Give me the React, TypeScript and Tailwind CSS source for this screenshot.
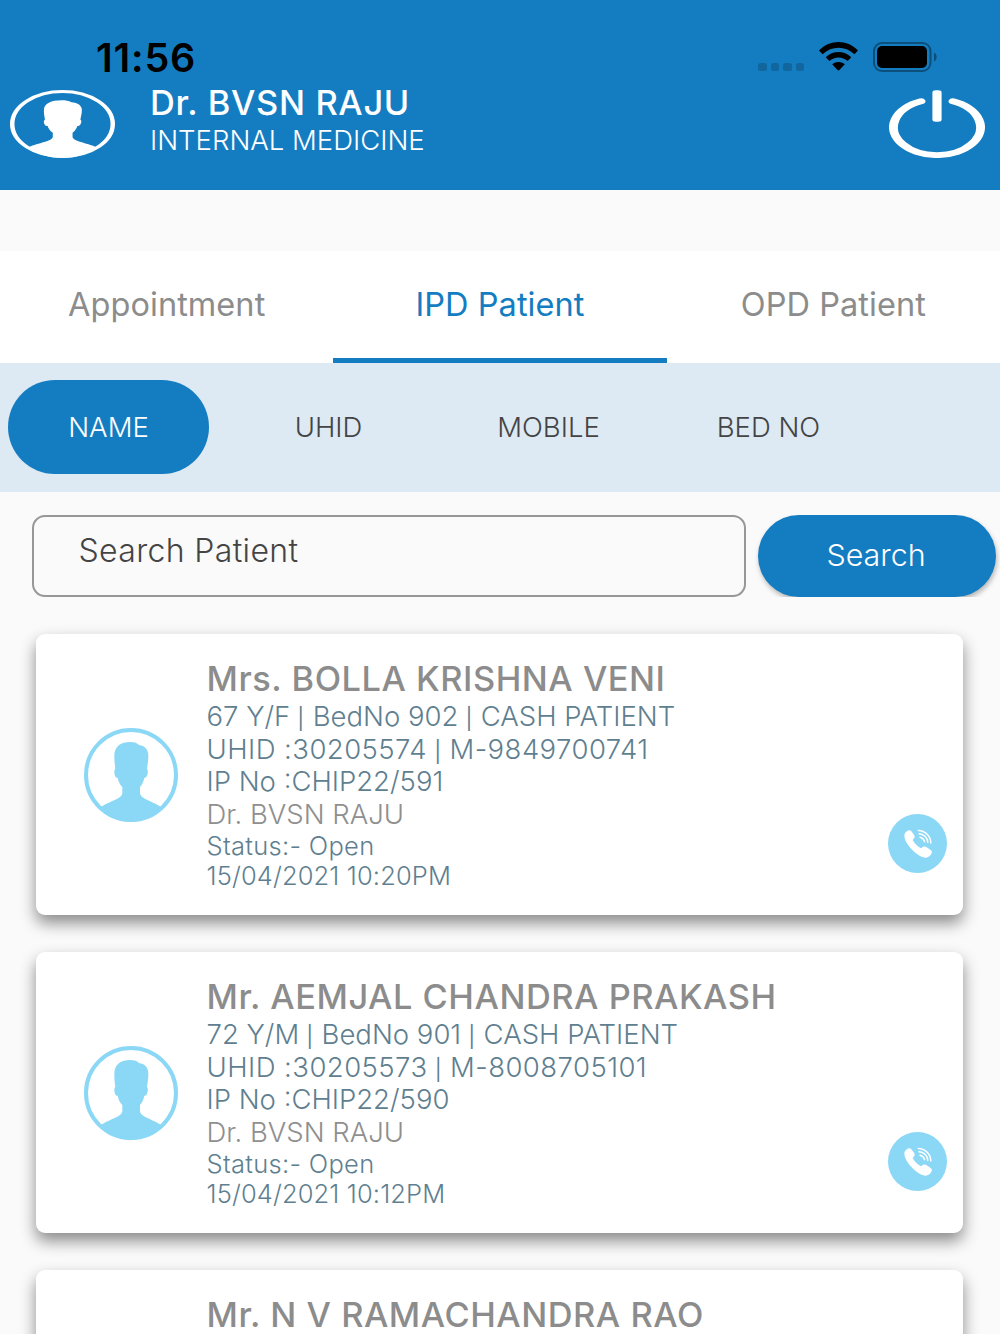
import clsx from "clsx";

interface Patient {
  name: string;
  info: string[];
  contact: string[];
  ipNo: string;
  doctor: string;
  status: string;
  date: string;
}

const tabs = ["Appointment", "IPD Patient", "OPD Patient"];
const filters = ["NAME", "UHID", "MOBILE", "BED NO"];

const patients: Patient[] = [
  {
    name: "Mrs. BOLLA KRISHNA VENI",
    info: ["67 Y/F", "BedNo 902", "CASH PATIENT"],
    contact: ["UHID :30205574", "M-9849700741"],
    ipNo: "IP No :CHIP22/591",
    doctor: "Dr. BVSN RAJU",
    status: "Status:- Open",
    date: "15/04/2021 10:20PM",
  },
  {
    name: "Mr. AEMJAL CHANDRA PRAKASH",
    info: ["72 Y/M", "BedNo 901", "CASH PATIENT"],
    contact: ["UHID :30205573", "M-8008705101"],
    ipNo: "IP No :CHIP22/590",
    doctor: "Dr. BVSN RAJU",
    status: "Status:- Open",
    date: "15/04/2021 10:12PM",
  },
  {
    name: "Mr. N V RAMACHANDRA RAO",
    info: [],
    contact: [],
    ipNo: "",
    doctor: "",
    status: "",
    date: "",
  },
];

function AvatarIcon({ className }: { className?: string }) {
  return (
    <svg
      viewBox="71 53 282 282"
      preserveAspectRatio="none"
      fill="currentColor"
      className={className}
    >
      <circle cx="212" cy="194" r="135" fill="none" stroke="currentColor" strokeWidth="12" />
      <path d="M210 95C220 95 229 97 236 104C253 106 264 117 264 136C264 150 262 162 260 175C264 179 263 188 260 196C258 201 255 202 252 202C250 213 246 221 239 230V247C239 266 278 272 302 290C282 318 250 334 212 334C174 334 142 318 122 290C146 272 186 266 186 247V230C178 221 174 213 172 202C168 202 166 201 164 196C161 188 161 179 165 175C163 162 162 150 162 136C162 108 182 95 210 95Z" />
    </svg>
  );
}

function PowerIcon() {
  return (
    <svg
      viewBox="-48 -58 96 106"
      preserveAspectRatio="none"
      className="w-24 h-[68px]"
      fill="none"
      stroke="white"
    >
      <path d="M-16 -40.4A43.5 43.5 0 1 0 16 -40.4" strokeWidth="9" strokeLinecap="round" />
      <rect x="-4.6" y="-57.5" width="9.2" height="49" rx="3.5" fill="white" stroke="none" />
    </svg>
  );
}

function PhoneIcon() {
  return (
    <svg viewBox="84 73 177 177" className="w-[59px] h-[59px]">
      <circle cx="172.5" cy="161.5" r="88.5" fill="#8ad7f6" />
      <path
        fill="white"
        d="M133 137C133 130 138 126 146 122C149 121 152 122 154 125L161 134C164 138 165 142 163 145L158 151C163 161 173 170 183 176L188 172C192 170 196 170 200 173L211 180C215 183 217 187 215 191C212 198 206 203 199 204C190 205 174 197 160 184C145 170 133 152 133 137Z"
      />
      <g fill="none" stroke="white" strokeWidth="4.6" strokeLinecap="round">
        <path d="M175 122.5A38 38 0 0 1 212.500 160" />
        <path d="M177 132A28 28 0 0 1 203.500 158" />
        <path d="M180 142.5A18 18 0 0 1 193.500 156" />
      </g>
    </svg>
  );
}

function StatusIcons() {
  return (
    <div className="flex items-start">
      <div className="flex gap-1 mt-[21px]">
        {[0, 1, 2, 3].map((dot) => (
          <span key={dot} className="w-[8.400px] h-2 rounded-[2.500px] bg-[#11669d]" />
        ))}
      </div>
      <svg viewBox="0 0 39 30" className="w-[39px] h-[30px] ml-[15px]">
        <path d="M0 8.500C11-2.700 28-2.700 39 8.500L35.400 12.200C26.500 3.600 12.500 3.600 3.600 12.200Z" />
        <path d="M6.700 15.300C13.800 8.300 25.200 8.300 32.300 15.300L28.600 19.100C23.600 14.300 15.400 14.300 10.400 19.100Z" />
        <path d="M13.200 22.200C17 19.200 22 19.200 25.800 22.200L20.400 28.100C19.800 28.700 19.200 28.700 18.600 28.100Z" />
      </svg>
      <svg viewBox="0 0 65 30" className="w-[65px] h-[30px] ml-[15px]">
        <rect x="1" y="1" width="56.500" height="28" rx="8" fill="none" stroke="#0d4f7b" strokeWidth="2" />
        <rect x="4" y="4" width="50" height="22" rx="5" />
        <path d="M61 10.500C64.500 12 64.500 18 61 19.500Z" fill="#0d4f7b" />
      </svg>
    </div>
  );
}

// Joins the parts of a line with a thin divider
function Divided({ parts }: { parts: string[] }) {
  return parts.map((part, index) => (
    <span key={part}>
      {index > 0 && (
        <span className="text-[21px] leading-none font-normal tracking-[1.200px]">{" | "}</span>
      )}
      {part}
    </span>
  ));
}

function PatientCard({ patient }: { patient: Patient }) {
  return (
    <div className="flex h-[280.500px] shrink-0 rounded-[9px] bg-white pt-[23px] pl-12 pr-4 shadow-[0_8px_16px_0_rgba(0,0,0,0.45)]">
      <AvatarIcon className="w-[94px] h-[94px] mt-[71px] text-[#8ad7f6]" />
      <div className="flex-1 ml-[28.500px] whitespace-pre font-light text-[27.500px] leading-[32.700px] text-[#5f7f90]">
        <div className="text-[34.400px] leading-[43px] font-medium tracking-[0.520px] text-[#8c8c8c]">
          {patient.name}
        </div>
        <div className="h-[32.700px]">
          <Divided parts={patient.info} />
        </div>
        <div className="h-[32.700px] tracking-[0.450px]">
          <Divided parts={patient.contact} />
        </div>
        <div>{patient.ipNo}</div>
        <div className="text-[#8f8f8f]">{patient.doctor}</div>
        <div className="text-[25.500px] leading-[30.500px] tracking-[0.300px]">{patient.status}</div>
        <div className="text-[25.500px] leading-[30.500px] tracking-[0.120px]">{patient.date}</div>
      </div>
      <div className="mt-[157px]">
        <PhoneIcon />
      </div>
    </div>
  );
}

export default function App() {
  return (
    <div className="w-[1000px] h-[1334px] overflow-hidden flex flex-col bg-[#fafafa] font-['Inter',sans-serif]">
      <header className="h-[189.500px] shrink-0 bg-[#147dc1]">
        <div className="flex h-[84px] justify-between pl-24 pr-[62px] pt-[42px]">
          <span className="text-[39.500px] leading-[32px] font-semibold tracking-[0.800px] text-black">
            11:56
          </span>
          <StatusIcons />
        </div>
        <div className="flex pl-[10px] pr-[15px]">
          <AvatarIcon className="w-[105px] h-[68px] mt-[6px] text-white" />
          <div className="flex-1 ml-[35px] text-white whitespace-nowrap">
            <div className="text-[34.400px] leading-[38px] font-medium tracking-[0.650px]">
              Dr. BVSN RAJU
            </div>
            <div className="text-[27.500px] leading-[36px] font-light">INTERNAL MEDICINE</div>
          </div>
          <div className="mt-[6px]">
            <PowerIcon />
          </div>
        </div>
      </header>

      <nav className="mt-[61px] h-[112.500px] shrink-0 grid grid-cols-3 bg-white">
        {tabs.map((tab) => (
          <div
            key={tab}
            className={clsx(
              "text-center text-[32.500px] leading-[107.500px] tracking-[0.060px] border-b-[5px]",
              tab === "IPD Patient"
                ? "text-[#147dc1] border-[#147dc1]"
                : "text-[#8c8c8c] border-transparent"
            )}
          >
            {tab}
          </div>
        ))}
      </nav>

      <div className="h-[128.500px] shrink-0 flex items-center gap-[19px] pl-2 bg-[#dde9f3]">
        {filters.map((filter) => (
          <div
            key={filter}
            className={clsx(
              "w-[201px] h-[94px] rounded-full text-center text-[27.500px] leading-[94px] font-light",
              filter === "NAME" ? "bg-[#147dc1] text-white" : "text-[#444]"
            )}
          >
            {filter}
          </div>
        ))}
      </div>

      <div className="mt-[23.500px] h-[82px] shrink-0 flex pl-8">
        <div className="w-[714px] rounded-[13px] border-2 border-[#979797] pl-[44.500px] text-[32px] leading-[68px] font-light tracking-[0.350px] text-[#444]">
          Search Patient
        </div>
        {/* the button's shadow is cut off at the bottom of the row */}
        <div className="flex-1 pl-3 overflow-hidden">
          <div className="w-[238px] h-[82px] rounded-full bg-[#147dc1] pr-[2px] text-center text-[30.400px] leading-[81px] font-light text-white shadow-[1px_3px_5px_rgba(0,0,0,0.28)]">
            Search
          </div>
        </div>
      </div>

      <div className="mt-[37px] pl-9 pr-[37px] flex flex-col gap-[37.600px]">
        {patients.map((patient) => (
          <PatientCard key={patient.name} patient={patient} />
        ))}
      </div>
    </div>
  );
}
